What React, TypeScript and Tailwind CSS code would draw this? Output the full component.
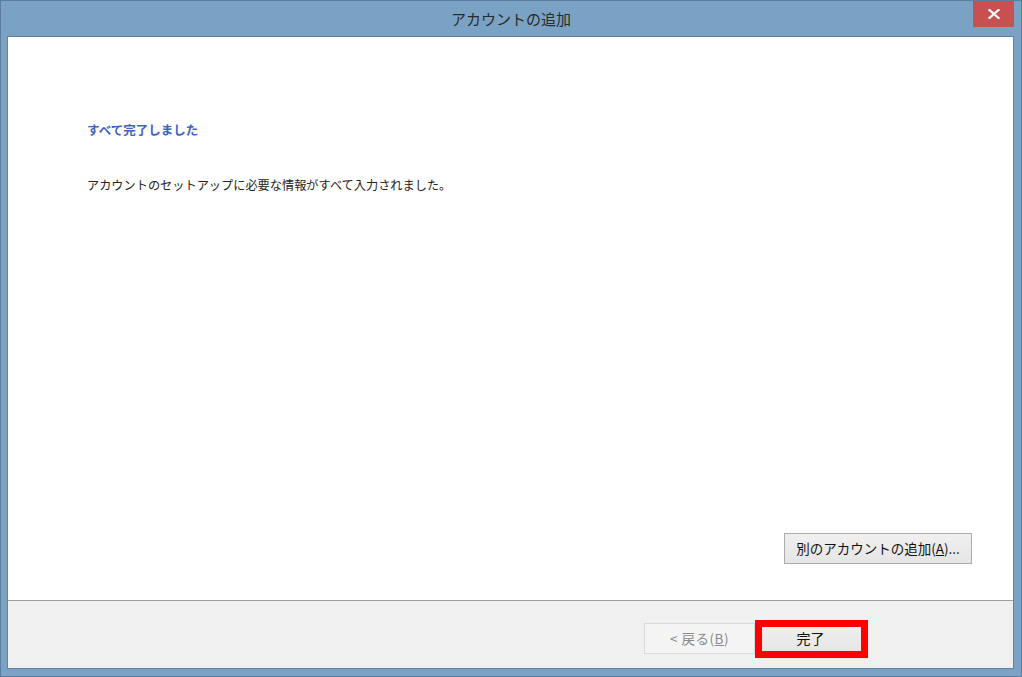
import React from "react";

const font = { fontFamily: '"Noto Sans CJK JP", "Noto Sans", sans-serif' };

const CloseIcon = () => (
  <svg width="12" height="10" viewBox="0 0 12 10">
    <path d="M1.5 1 L10.5 9 M10.5 1 L1.5 9" stroke="#fff" strokeWidth="2.2" strokeLinecap="square" />
  </svg>
);

const App = () => {
  return (
    <div
      className="w-[1022px] h-[677px] bg-[#7aa2c4] border border-[#5d7d9c] flex flex-col text-[#1e1e1e]"
      style={font}
    >
      {/* title bar */}
      <div className="relative h-[35px] flex items-center justify-center">
        <span className="text-[15px] text-[#2a2a2a] pt-[2px]">アカウントの追加</span>
        <button className="absolute right-[7px] top-0 w-[41px] h-[26px] bg-[#c75050] flex items-center justify-center">
          <CloseIcon />
        </button>
      </div>

      {/* client area */}
      <div className="flex-1 ml-[6px] mr-[7px] mb-[7px] border border-[#5f82a3] flex flex-col">
        <div className="flex-1 bg-white flex flex-col pl-[79px] pr-[41px] pt-[85px] pb-[36px]">
          <h1 className="text-[12.5px] leading-[16px] font-bold text-[#3f63c3]">すべて完了しました</h1>
          <p className="mt-[39px] text-[12.2px] leading-[16px] text-[#222]">
            アカウントのセットアップに必要な情報がすべて入力されました。
          </p>
          <div className="flex-1" />
          <div className="flex justify-end">
            <button className="w-[188px] h-[31px] border border-[#acacac] bg-gradient-to-b from-[#f0f0f0] to-[#e5e5e5] text-[13.5px] text-[#111]">
              別のアカウントの追加(<span className="underline">A</span>)...
            </button>
          </div>
        </div>
        <div className="h-[68px] border-t border-[#a0a0a0] bg-[#f0f0f0] flex justify-end items-start pt-[22px] pr-[147px]">
          <button className="w-[111px] h-[31px] border border-[#d9d9d9] bg-[#f4f4f4] text-[13.5px] text-[#8a8a8a] tracking-[0.5px]">
            &lt; 戻る(<span className="underline">B</span>)
          </button>
          <div className="relative">
            <button className="w-[111px] h-[31px] border border-[#acacac] bg-gradient-to-b from-[#f0f0f0] to-[#e5e5e5] text-[14px] text-[#111]">
              完了
            </button>
            <div className="absolute left-0 top-[-3px] w-[113px] h-[38px] border-[7px] border-[#ff0000] pointer-events-none" />
          </div>
        </div>
      </div>
    </div>
  );
};

export default App;
